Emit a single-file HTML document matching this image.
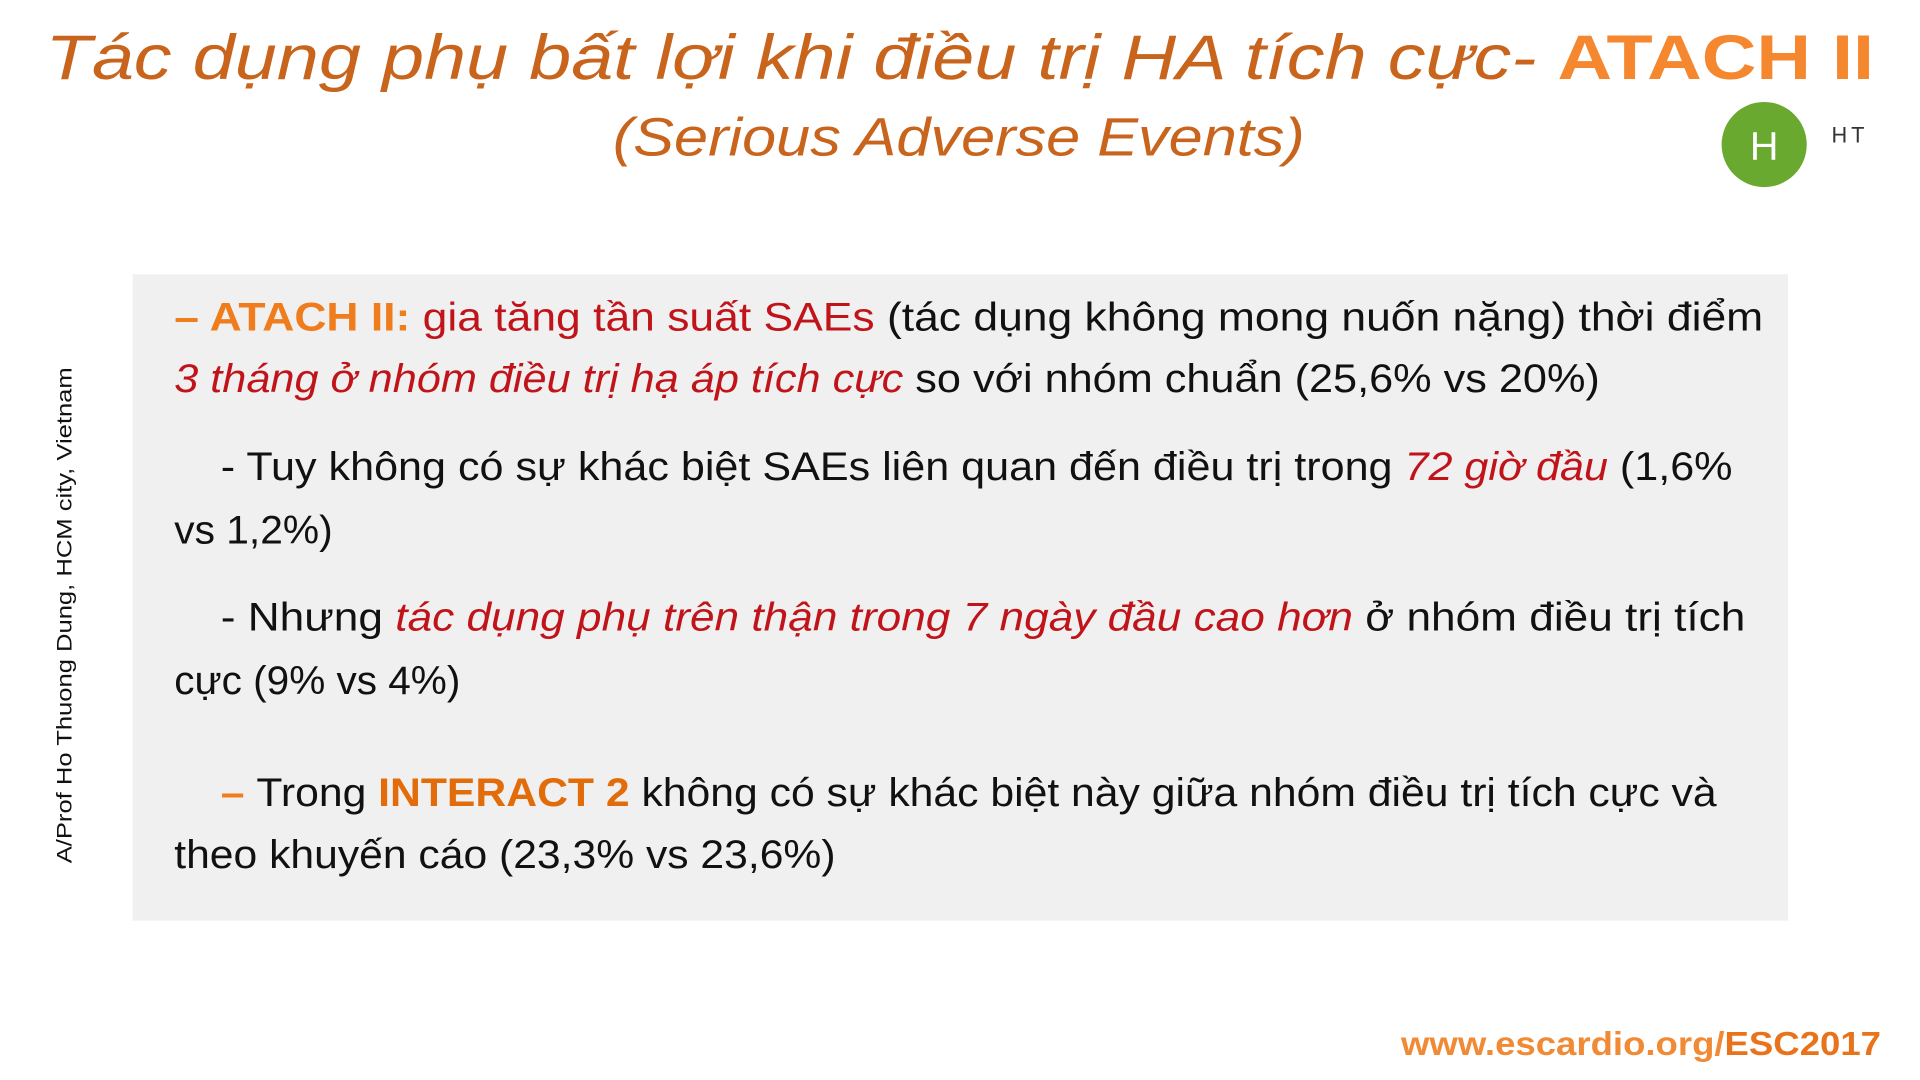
<!DOCTYPE html>
<html><head><meta charset="utf-8"><style>
html,body{margin:0;padding:0;background:#fff;width:1920px;height:1080px;overflow:hidden}
svg{position:absolute;left:0;top:0}
</style></head><body>
<svg width="1920" height="1080" viewBox="0 0 1920 1080" xmlns="http://www.w3.org/2000/svg">
<g font-family="Liberation Sans, sans-serif">
<g transform="scale(0.99)">
<rect x="134" y="277" width="1672" height="653" fill="#f0f0f0"/>
<text x="46" y="80" font-size="64" font-style="italic" fill="#c8641c" textLength="1847" lengthAdjust="spacingAndGlyphs">Tác dụng phụ bất lợi khi điều trị HA tích cực- <tspan font-style="normal" font-weight="bold" fill="#f5872f">ATACH II</tspan></text>
<text x="619" y="157" font-size="54" font-style="italic" fill="#c8641c" textLength="699" lengthAdjust="spacingAndGlyphs">(Serious Adverse Events)</text>
<circle cx="1782" cy="146" r="43" fill="#6aa92f"/>
<text x="1782" y="161" font-size="40" fill="#fff" text-anchor="middle">H</text>
<text x="1850" y="144" font-size="22" fill="#333" letter-spacing="4">HT</text>

<g font-size="40" fill="#111">
<text x="176" y="334" textLength="1605" lengthAdjust="spacingAndGlyphs"><tspan fill="#f07d1d" font-weight="bold">– ATACH II: </tspan><tspan fill="#c0141a">gia tăng tần suất SAEs</tspan> (tác dụng không mong nuốn nặng) thời điểm</text>
<text x="176" y="396" textLength="1440" lengthAdjust="spacingAndGlyphs"><tspan fill="#c0141a" font-style="italic">3 tháng ở nhóm điều trị hạ áp tích cực</tspan> so với nhóm chuẩn (25,6% vs 20%)</text>
<text x="223" y="485" textLength="1527" lengthAdjust="spacingAndGlyphs">- Tuy không có sự khác biệt SAEs liên quan đến điều trị trong <tspan fill="#c0141a" font-style="italic">72 giờ đầu</tspan> (1,6%</text>
<text x="176" y="549" textLength="160" lengthAdjust="spacingAndGlyphs">vs 1,2%)</text>
<text x="223" y="637" textLength="1540" lengthAdjust="spacingAndGlyphs">- Nhưng <tspan fill="#c0141a" font-style="italic">tác dụng phụ trên thận trong 7 ngày đầu cao hơn</tspan> ở nhóm điều trị tích</text>
<text x="176" y="701" textLength="289" lengthAdjust="spacingAndGlyphs">cực (9% vs 4%)</text>
<text x="223" y="814" textLength="1511" lengthAdjust="spacingAndGlyphs"><tspan fill="#f07d1d" font-weight="bold">– </tspan>Trong <tspan fill="#e36c0a" font-weight="bold">INTERACT 2</tspan> không có sự khác biệt này giữa nhóm điều trị tích cực và</text>
<text x="176" y="877" textLength="668" lengthAdjust="spacingAndGlyphs">theo khuyến cáo (23,3% vs 23,6%)</text>
</g>

<text transform="translate(72,872) rotate(-90)" font-size="21" fill="#111" textLength="501" lengthAdjust="spacingAndGlyphs">A/Prof Ho Thuong Dung, HCM city, Vietnam</text>
</g>
<text x="1401" y="1055" font-size="33" font-weight="bold" fill="#f08a35" textLength="480" lengthAdjust="spacingAndGlyphs">www.escardio.org/<tspan fill="#e8731a" font-weight="bold">ESC2017</tspan></text>
</g>
</svg>
</body></html>
